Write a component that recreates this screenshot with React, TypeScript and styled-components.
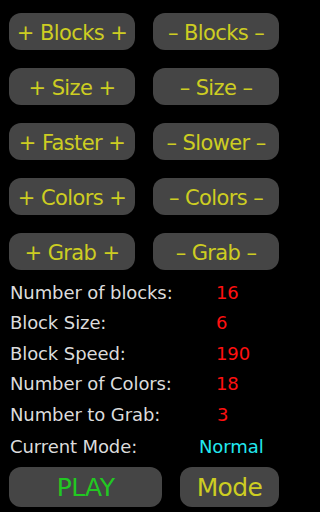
import styled, { createGlobalStyle } from 'styled-components';

const GlobalStyle = createGlobalStyle`
  html, body {
    margin: 0;
    padding: 0;
    background: #000;
  }
  body {
    font-family: 'DejaVu Sans', 'Noto Sans', sans-serif;
  }
`;

const Screen = styled.div`
  width: 288px;
  height: 512px;
  box-sizing: border-box;
  padding: 13px 9px 0 9px;
  display: flex;
  flex-direction: column;
  background: #000;
  overflow: hidden;
`;

const ButtonGrid = styled.div`
  display: grid;
  grid-template-columns: 126px 126px;
  column-gap: 18px;
  row-gap: 18px;
`;

const PillButton = styled.button<{ $color?: string; $size?: number; $height?: number }>`
  height: ${(p) => p.$height ?? 37}px;
  border: 0;
  border-radius: 12px;
  background: #454545;
  color: ${(p) => p.$color ?? '#cdcd22'};
  font-family: 'DejaVu Sans', 'Noto Sans', sans-serif;
  font-size: ${(p) => p.$size ?? 21}px;
  letter-spacing: -0.6px;
  padding: 2px 0 0 0;
  display: flex;
  align-items: center;
  justify-content: center;
  white-space: nowrap;
  cursor: pointer;
`;

const Stats = styled.div`
  display: flex;
  flex-direction: column;
  margin-top: 7px;
  padding-left: 1px;
`;

const StatRow = styled.div<{ $height?: number }>`
  display: grid;
  grid-template-columns: 206px 1fr;
  align-items: center;
  height: ${(p) => p.$height ?? 30.5}px;
  font-size: 18px;
  letter-spacing: -0.1px;
`;

const Label = styled.span`
  color: #dcdcdc;
  white-space: nowrap;
`;

const Value = styled.span<{ $color?: string; $shift?: number }>`
  color: ${(p) => p.$color ?? '#ff1010'};
  margin-left: ${(p) => p.$shift ?? 0}px;
  white-space: nowrap;
`;

const BottomBar = styled.div`
  display: grid;
  grid-template-columns: 153px 99px;
  column-gap: 18px;
  margin-top: 4px;
`;

const adjustButtons = [
  ['+ Blocks +', '\u2013 Blocks \u2013'],
  ['+ Size +', '\u2013 Size \u2013'],
  ['+ Faster +', '\u2013 Slower \u2013'],
  ['+ Colors +', '\u2013 Colors \u2013'],
  ['+ Grab +', '\u2013 Grab \u2013'],
];

const stats: { label: string; value: string; color?: string; shift?: number; height?: number }[] = [
  { label: 'Number of blocks:', value: '16' },
  { label: 'Block Size:', value: '6' },
  { label: 'Block Speed:', value: '190' },
  { label: 'Number of Colors:', value: '18' },
  { label: 'Number to Grab:', value: '3', shift: 1 },
  { label: 'Current Mode:', value: 'Normal', color: '#22e8f0', shift: -17, height: 33 },
];

export default function App() {
  return (
    <>
      <GlobalStyle />
      <Screen>
        <ButtonGrid>
          {adjustButtons.map(([inc, dec]) => [
            <PillButton key={inc}>{inc}</PillButton>,
            <PillButton key={dec}>{dec}</PillButton>,
          ])}
        </ButtonGrid>
        <Stats>
          {stats.map((s) => (
            <StatRow key={s.label} $height={s.height}>
              <Label>{s.label}</Label>
              <Value $color={s.color} $shift={s.shift}>
                {s.value}
              </Value>
            </StatRow>
          ))}
        </Stats>
        <BottomBar>
          <PillButton $color="#22c822" $size={25} $height={40}>
            PLAY
          </PillButton>
          <PillButton $size={25} $height={40}>
            Mode
          </PillButton>
        </BottomBar>
      </Screen>
    </>
  );
}
